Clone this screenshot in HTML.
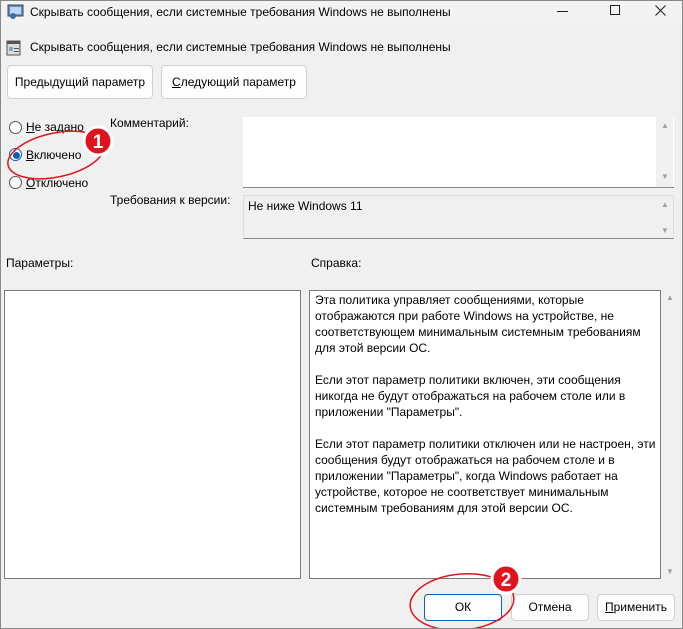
<!DOCTYPE html>
<html><head><meta charset="utf-8"><style>
*{margin:0;padding:0;box-sizing:border-box}
body{width:683px;height:629px;overflow:hidden;background:#f0f0f0;font-family:"Liberation Sans",sans-serif;font-size:12px;color:#000;position:relative}
.a{position:absolute;white-space:nowrap}
.btn{position:absolute;background:#fdfdfd;border:1px solid #d0d0d0;border-radius:4px;text-align:center;font-size:12px}
.rad{position:absolute;width:13px;height:13px;border:1px solid #555;border-radius:50%;background:#fff}
.sb{position:absolute;color:#a0a0a0;font-size:8px}
u{text-decoration:underline}
</style></head><body>
<div class="a" style="left:0;top:0;width:683px;height:25px;background:#f3f3f3"></div>
<svg class="a" style="left:7px;top:3px" width="18" height="18"><rect x="1" y="2" width="15" height="11" fill="#5a8fd0" stroke="#444"/><rect x="3" y="4" width="11" height="7" fill="#bcd8f4"/><circle cx="6" cy="13" r="3" fill="#3a6ea8"/></svg>
<div class="a" style="left:30px;top:5px;font-size:12px">Скрывать сообщения, если системные требования Windows не выполнены</div>
<div class="a" style="left:557px;top:11px;width:11px;height:1px;background:#222"></div>
<div class="a" style="left:610px;top:5px;width:10px;height:10px;border:1px solid #222"></div>
<svg class="a" style="left:655px;top:5px" width="11" height="11"><path d="M0.5 0.5L10.5 10.5M10.5 0.5L0.5 10.5" stroke="#222" stroke-width="1.1"/></svg>
<svg class="a" style="left:6px;top:40px" width="16" height="16"><rect x="1" y="1" width="13" height="14" fill="#ddd" stroke="#555"/><rect x="1" y="1" width="13" height="3" fill="#555"/><rect x="3" y="7" width="4" height="4" fill="#7ab"/><rect x="8" y="8" width="5" height="1" fill="#555"/><rect x="8" y="11" width="5" height="1" fill="#555"/></svg>
<div class="a" style="left:30px;top:40px">Скрывать сообщения, если системные требования Windows не выполнены</div>
<div class="btn" style="left:7px;top:65px;width:146px;height:34px;line-height:32px">Пре<u>д</u>ыдущий параметр</div>
<div class="btn" style="left:161px;top:65px;width:146px;height:34px;line-height:32px"><u>С</u>ледующий параметр</div>
<div class="rad" style="left:9px;top:121px"></div>
<div class="a" style="left:26px;top:120px"><u>Н</u>е задано</div>
<div class="rad" style="left:9px;top:148px;border-color:#0f5fb5"></div>
<div class="a" style="left:13px;top:152px;width:7px;height:7px;border-radius:50%;background:#0f5fb5"></div>
<div class="a" style="left:26px;top:148px"><u>В</u>ключено</div>
<div class="rad" style="left:9px;top:176px"></div>
<div class="a" style="left:26px;top:176px"><u>О</u>тключено</div>
<div class="a" style="left:110px;top:116px">Комментарий:</div>
<div class="a" style="left:110px;top:193px">Требования к версии:</div>
<div class="a" style="left:243px;top:117px;width:431px;height:71px;background:#fff;border-bottom:1px solid #888"></div>
<div class="a" style="left:656px;top:117px;width:17px;height:70px;background:#f0f0f0"></div>
<div class="sb" style="left:661px;top:121px">▲</div><div class="sb" style="left:661px;top:172px">▼</div>
<div class="a" style="left:243px;top:195px;width:431px;height:44px;background:#f0f0f0;border:1px solid #ddd;border-bottom:1px solid #888"></div>
<div class="a" style="left:248px;top:199px">Не ниже Windows 11</div>
<div class="sb" style="left:661px;top:200px">▲</div><div class="sb" style="left:661px;top:226px">▼</div>
<div class="a" style="left:6px;top:256px">Параметры:</div>
<div class="a" style="left:311px;top:256px">Справка:</div>
<div class="a" style="left:4px;top:290px;width:297px;height:289px;background:#fff;border:1px solid #7a7a7a"></div>
<div class="a" style="left:309px;top:290px;width:352px;height:289px;background:#fff;border:1px solid #7a7a7a"></div>
<div class="sb" style="left:666px;top:293px">▲</div><div class="sb" style="left:666px;top:567px">▼</div>
<div class="a" style="left:315px;top:292px;line-height:16px;font-size:12px">Эта политика управляет сообщениями, которые<br>отображаются при работе Windows на устройстве, не<br>соответствующем минимальным системным требованиям<br>для этой версии ОС.<br><br>Если этот параметр политики включен, эти сообщения<br>никогда не будут отображаться на рабочем столе или в<br>приложении "Параметры".<br><br>Если этот параметр политики отключен или не настроен, эти<br>сообщения будут отображаться на рабочем столе и в<br>приложении "Параметры", когда Windows работает на<br>устройстве, которое не соответствует минимальным<br>системным требованиям для этой версии ОС.</div>
<div class="btn" style="left:424px;top:594px;width:78px;height:27px;line-height:25px;border-color:#0f5fb5">ОК</div>
<div class="btn" style="left:511px;top:594px;width:78px;height:27px;line-height:25px">Отмена</div>
<div class="btn" style="left:597px;top:594px;width:78px;height:27px;line-height:25px"><u>П</u>рименить</div>
<svg class="a" style="left:0;top:0" width="683" height="629">
<ellipse cx="56" cy="155" rx="49" ry="22" fill="none" stroke="#e0141e" stroke-width="1.5" transform="rotate(-12 56 155)"/>
<circle cx="98" cy="141" r="14" fill="#e0141e" stroke="#fff" stroke-width="3"/>
<text x="98" y="148" text-anchor="middle" font-family="Liberation Sans" font-weight="bold" font-size="19" fill="#fff">1</text>
<ellipse cx="462" cy="602" rx="52" ry="28" fill="none" stroke="#e0141e" stroke-width="1.5" transform="rotate(-5 462 602)"/>
<circle cx="506" cy="579" r="14" fill="#e0141e" stroke="#fff" stroke-width="3"/>
<text x="506" y="586" text-anchor="middle" font-family="Liberation Sans" font-weight="bold" font-size="19" fill="#fff">2</text>
</svg>
<div class="a" style="left:0;top:0;width:683px;height:629px;border:1px solid #888"></div>
</body></html>
